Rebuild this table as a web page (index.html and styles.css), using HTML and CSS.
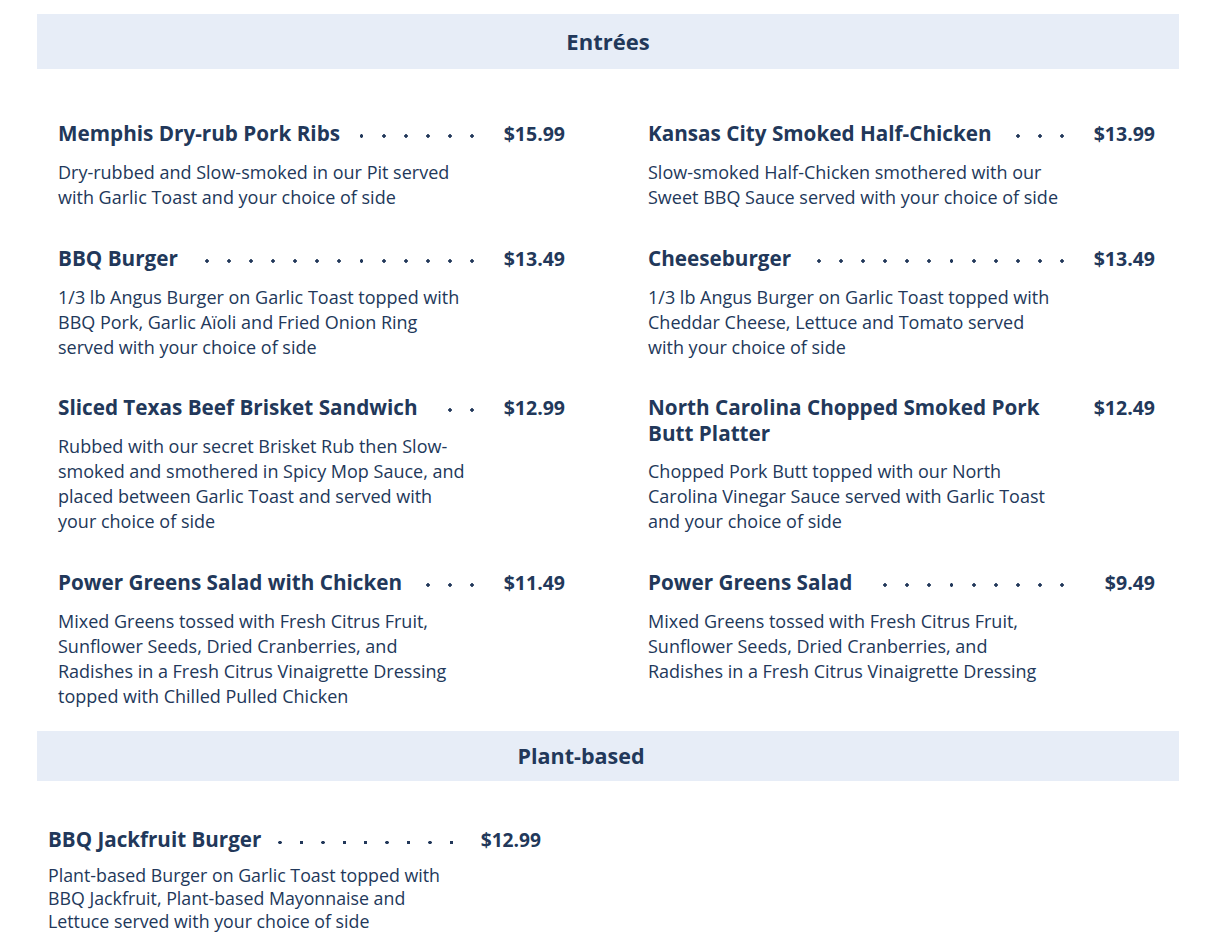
FILE: index.html
```html
<!DOCTYPE html>
<html lang="en">
<head>
<meta charset="utf-8">
<title>Menu</title>
<link rel="stylesheet" href="styles.css">
</head>
<body>
<main class="menu">
  <section class="section">
    <h2 class="section-title">Entrées</h2>
    <div class="items">
      <article class="item">
        <div class="item-head"><h3 class="item-name">Memphis Dry-rub Pork Ribs</h3><span class="dots"><i></i><i></i><i></i><i></i><i></i><i></i><i></i><i></i><i></i><i></i><i></i><i></i><i></i><i></i><i></i><i></i><i></i><i></i><i></i><i></i></span><span class="price">$15.99</span></div>
        <p class="item-desc">Dry-rubbed and Slow-smoked in our Pit served<br>with Garlic Toast and your choice of side</p>
      </article>
      <article class="item">
        <div class="item-head"><h3 class="item-name">Kansas City Smoked Half-Chicken</h3><span class="dots"><i></i><i></i><i></i><i></i><i></i><i></i><i></i><i></i><i></i><i></i><i></i><i></i><i></i><i></i><i></i><i></i><i></i><i></i><i></i><i></i></span><span class="price">$13.99</span></div>
        <p class="item-desc">Slow-smoked Half-Chicken smothered with our<br>Sweet BBQ Sauce served with your choice of side</p>
      </article>
      <article class="item">
        <div class="item-head"><h3 class="item-name">BBQ Burger</h3><span class="dots"><i></i><i></i><i></i><i></i><i></i><i></i><i></i><i></i><i></i><i></i><i></i><i></i><i></i><i></i><i></i><i></i><i></i><i></i><i></i><i></i></span><span class="price">$13.49</span></div>
        <p class="item-desc">1/3 lb Angus Burger on Garlic Toast topped with<br>BBQ Pork, Garlic Aïoli and Fried Onion Ring<br>served with your choice of side</p>
      </article>
      <article class="item">
        <div class="item-head"><h3 class="item-name">Cheeseburger</h3><span class="dots"><i></i><i></i><i></i><i></i><i></i><i></i><i></i><i></i><i></i><i></i><i></i><i></i><i></i><i></i><i></i><i></i><i></i><i></i><i></i><i></i></span><span class="price">$13.49</span></div>
        <p class="item-desc">1/3 lb Angus Burger on Garlic Toast topped with<br>Cheddar Cheese, Lettuce and Tomato served<br>with your choice of side</p>
      </article>
      <article class="item">
        <div class="item-head"><h3 class="item-name">Sliced Texas Beef Brisket Sandwich</h3><span class="dots"><i></i><i></i><i></i><i></i><i></i><i></i><i></i><i></i><i></i><i></i><i></i><i></i><i></i><i></i><i></i><i></i><i></i><i></i><i></i><i></i></span><span class="price">$12.99</span></div>
        <p class="item-desc">Rubbed with our secret Brisket Rub then Slow-<br>smoked and smothered in Spicy Mop Sauce, and<br>placed between Garlic Toast and served with<br>your choice of side</p>
      </article>
      <article class="item">
        <div class="item-head"><h3 class="item-name">North Carolina Chopped Smoked Pork Butt Platter</h3><span class="dots"><i></i><i></i><i></i><i></i><i></i><i></i><i></i><i></i><i></i><i></i><i></i><i></i><i></i><i></i><i></i><i></i><i></i><i></i><i></i><i></i></span><span class="price">$12.49</span></div>
        <p class="item-desc">Chopped Pork Butt topped with our North<br>Carolina Vinegar Sauce served with Garlic Toast<br>and your choice of side</p>
      </article>
      <article class="item">
        <div class="item-head"><h3 class="item-name">Power Greens Salad with Chicken</h3><span class="dots"><i></i><i></i><i></i><i></i><i></i><i></i><i></i><i></i><i></i><i></i><i></i><i></i><i></i><i></i><i></i><i></i><i></i><i></i><i></i><i></i></span><span class="price">$11.49</span></div>
        <p class="item-desc">Mixed Greens tossed with Fresh Citrus Fruit,<br>Sunflower Seeds, Dried Cranberries, and<br>Radishes in a Fresh Citrus Vinaigrette Dressing<br>topped with Chilled Pulled Chicken</p>
      </article>
      <article class="item">
        <div class="item-head"><h3 class="item-name">Power Greens Salad</h3><span class="dots"><i></i><i></i><i></i><i></i><i></i><i></i><i></i><i></i><i></i><i></i><i></i><i></i><i></i><i></i><i></i><i></i><i></i><i></i><i></i><i></i></span><span class="price">$9.49</span></div>
        <p class="item-desc">Mixed Greens tossed with Fresh Citrus Fruit,<br>Sunflower Seeds, Dried Cranberries, and<br>Radishes in a Fresh Citrus Vinaigrette Dressing</p>
      </article>
    </div>
  </section>
  <section class="section section-small">
    <h2 class="section-title">Plant-based</h2>
    <div class="items">
      <article class="item">
        <div class="item-head"><h3 class="item-name">BBQ Jackfruit Burger</h3><span class="dots"><i></i><i></i><i></i><i></i><i></i><i></i><i></i><i></i><i></i><i></i><i></i><i></i><i></i><i></i><i></i><i></i><i></i><i></i><i></i><i></i></span><span class="price">$12.99</span></div>
        <p class="item-desc">Plant-based Burger on Garlic Toast topped with<br>BBQ Jackfruit, Plant-based Mayonnaise and<br>Lettuce served with your choice of side</p>
      </article>
    </div>
  </section>
</main>
</body>
</html>
```

FILE: styles.css
```css
* { box-sizing: border-box; }

html, body {
  margin: 0;
  padding: 0;
  background: #ffffff;
}

body {
  font-family: "Open Sans", "Noto Sans", "Liberation Sans", sans-serif;
  color: #22385a;
}

.menu {
  width: 1142px;
  margin: 14px 0 0 37px;
}

.section-title {
  margin: 0;
  height: 55px;
  background: #e7edf7;
  font-size: 22px;
  font-weight: 700;
  line-height: 55px;
  text-align: center;
  color: #22385a;
}

.items {
  display: grid;
  grid-template-columns: 507px 507px;
  column-gap: 83px;
  row-gap: 34.5px;
  padding: 51px 0 22.5px 21px;
}

.item-head {
  display: flex;
  align-items: baseline;
}

.item-name {
  flex: 0 1 auto;
  margin: 0;
  font-size: 20.7px;
  font-weight: 700;
  line-height: 26px;
}

/* dot leaders: only whole dots fit on the first (visible) line */
.dots {
  flex: 1 1 0;
  min-width: 0;
  align-self: flex-start;
  display: flex;
  flex-wrap: wrap;
  justify-content: flex-end;
  align-content: flex-start;
  height: 26px;
  margin-left: 8px;
  overflow: hidden;
}

.dots i {
  flex: none;
  width: 22.1px;
  height: 26px;
  background: radial-gradient(circle at 50% 16px, #22385a 1.5px, transparent 2px);
}

.price {
  flex: none;
  width: 82px;
  text-align: right;
  font-size: 19.5px;
  font-weight: 700;
  line-height: 26px;
}

.item-desc {
  margin: 13px 0 0;
  max-width: 460px;
  font-size: 18px;
  line-height: 25px;
}

/* Plant-based section */
.section-small .section-title {
  height: 50px;
  line-height: 50px;
  padding-right: 54px;
  font-size: 21.5px;
}

.section-small .items {
  grid-template-columns: 493px;
  padding: 46px 0 10px 11px;
}

.section-small .item-name {
  font-size: 20.6px;
  line-height: 24px;
}

.section-small .dots {
  height: 24px;
}

.section-small .dots i {
  width: 21.4px;
  height: 24px;
  background: radial-gradient(circle at 50% 15.5px, #22385a 1.5px, transparent 2px);
}

.section-small .price {
  width: 79px;
  font-size: 19.2px;
  line-height: 24px;
}

.section-small .item-desc {
  margin-top: 12px;
  max-width: 460px;
  font-size: 17.8px;
  line-height: 23px;
}
```
